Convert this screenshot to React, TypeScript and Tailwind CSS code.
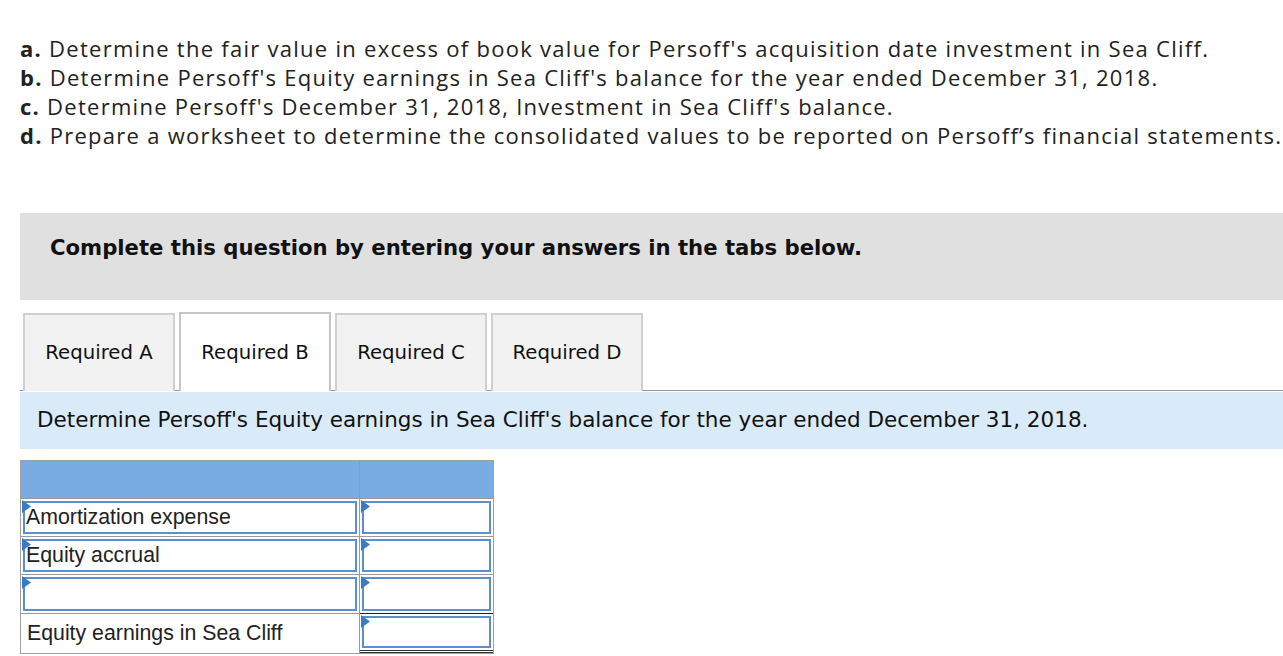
import React from "react";

const Tri = () => (
  <svg className="absolute left-[1px] top-[1px]" width="9" height="13" viewBox="0 0 9 13">
    <polygon points="0,0 9,6.5 0,13" fill="#3b7bc4" />
  </svg>
);

const InputCell = ({ children }: { children?: React.ReactNode }) => (
  <div className="relative h-full p-[2px]">
    <div className="relative h-full border-2 border-[#5a8fd2] bg-white flex items-center pl-[1px] text-[21.3px] text-[#222]">
      {children}
    </div>
    <Tri />
  </div>
);

export default function App() {
  return (
    <div className="w-[1283px] h-[656px] overflow-hidden bg-white">
      <div
        className="pt-[34px] pl-[20px] text-[22px] leading-[29px] tracking-[1.27px] text-[#222] whitespace-nowrap"
        style={{ fontFamily: "'Open Sans', sans-serif" }}
      >
        <div><b>a.</b> Determine the fair value in excess of book value for Persoff's acquisition date investment in Sea Cliff.</div>
        <div><b>b.</b> Determine Persoff's Equity earnings in Sea Cliff's balance for the year ended December 31, 2018.</div>
        <div><b>c.</b> Determine Persoff's December 31, 2018, Investment in Sea Cliff's balance.</div>
        <div><b>d.</b> Prepare a worksheet to determine the consolidated values to be reported on Persoff’s financial statements.</div>
      </div>

      <div className="ml-[20px] mt-[63px]" style={{ fontFamily: "'DejaVu Sans', Verdana, sans-serif" }}>
        <div className="h-[87px] bg-[#e0e0e0] pl-[30px] pt-[21px] leading-[28px] text-[21.2px] font-bold text-[#111] whitespace-nowrap">
          Complete this question by entering your answers in the tabs below.
        </div>

        <div className="mt-[13px] flex items-end gap-[4px] pl-[3px] border-b border-[#999] h-[78px]">
          {["Required A", "Required B", "Required C", "Required D"].map((t, i) => (
            <div
              key={t}
              className={
                i === 1
                  ? "w-[152px] h-[79px] -mb-px bg-white border-2 border-b-0 border-[#c6c6c6] flex items-center justify-center text-[19.7px] text-[#111]"
                  : "w-[152px] h-[78px] -mb-px bg-[#f2f2f2] border-2 border-b-0 border-[#d0d0d0] flex items-center justify-center text-[19.7px] text-[#111]"
              }
            >
              {t}
            </div>
          ))}
        </div>

        <div className="mt-[1px] h-[57px] bg-[#d9eaf8] flex items-center pl-[17px] text-[21.5px] text-[#111] whitespace-nowrap">
          Determine Persoff's Equity earnings in Sea Cliff's balance for the year ended December 31, 2018.
        </div>

        <div
          className="mt-[11px] w-[474px] border border-[#a0a0a0] grid grid-cols-[339px_1fr] grid-rows-[38px_38px_38px_39px_39px]"
          style={{ fontFamily: "'Liberation Sans', Arial, sans-serif" }}
        >
          <div className="bg-[#79ace2] border-r border-b border-[#999]" />
          <div className="bg-[#79ace2] border-b border-[#999]" />

          <div className="border-r border-b border-[#999]"><InputCell>Amortization expense</InputCell></div>
          <div className="border-b border-[#999]"><InputCell /></div>

          <div className="border-r border-b border-[#999]"><InputCell>Equity accrual</InputCell></div>
          <div className="border-b border-[#999]"><InputCell /></div>

          <div className="border-r border-b border-[#999]"><InputCell /></div>
          <div className="border-b border-[#222]"><InputCell /></div>

          <div className="border-r border-[#999] flex items-center pl-[6px] text-[21.3px] text-[#222]">Equity earnings in Sea Cliff</div>
          <div className="relative border-b-[3px] border-double border-[#333]"><InputCell /></div>
        </div>
      </div>
    </div>
  );
}
